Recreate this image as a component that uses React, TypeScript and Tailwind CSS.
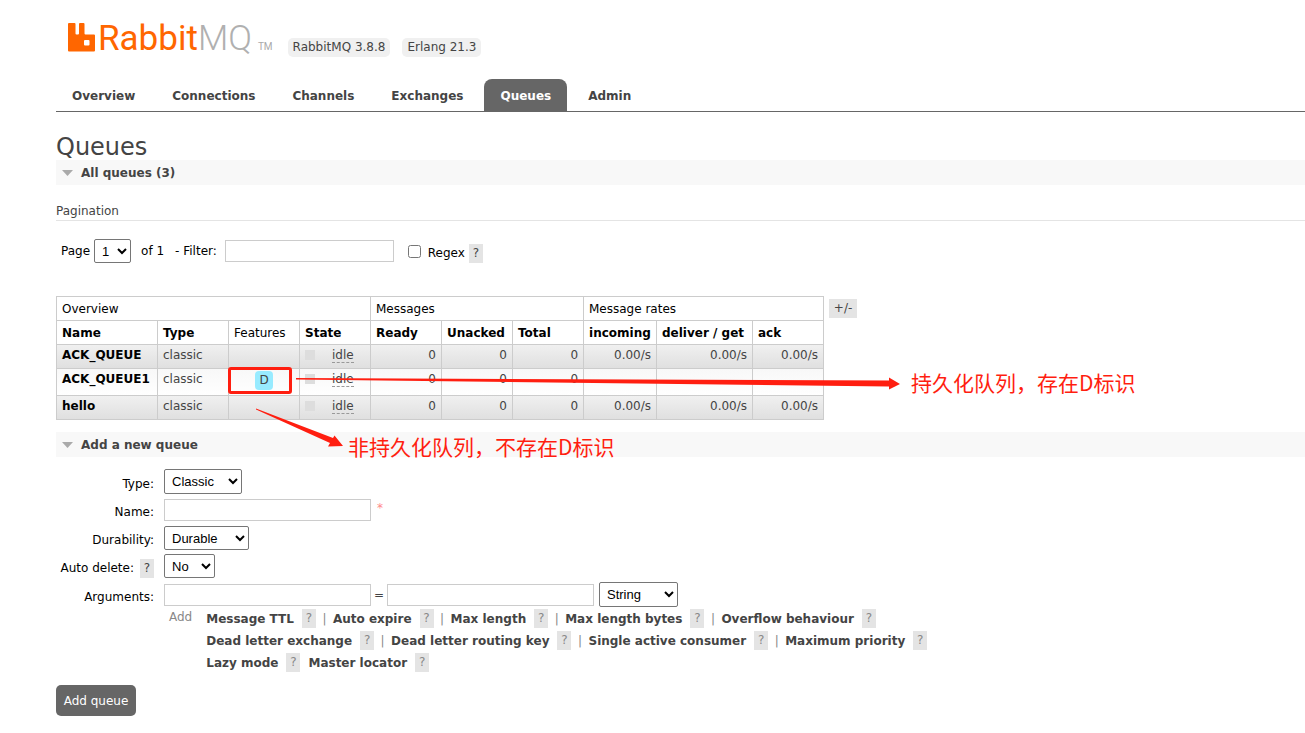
import React from 'react';

const tabs = ['Overview', 'Connections', 'Channels', 'Exchanges', 'Queues', 'Admin'];

const queues = [
  { name: 'ACK_QUEUE', durable: false, rate: '0.00/s' },
  { name: 'ACK_QUEUE1', durable: true, rate: '' },
  { name: 'hello', durable: false, rate: '0.00/s' },
];

const argumentRows = [
  ['Message TTL', 'Auto expire', 'Max length', 'Max length bytes', 'Overflow behaviour'],
  ['Dead letter exchange', 'Dead letter routing key', 'Single active consumer', 'Maximum priority'],
];

const inputStyle = 'h-[22px] border border-[#ccc] bg-white px-1';
const selectStyle =
  "rounded-[2px] border border-[#767676] bg-white pl-[3px] font-['Liberation_Sans',sans-serif] text-[13px] text-black";
const cellStyle = 'border border-[#ccc] px-[5px] pt-0.5 align-top leading-4';

const Help = ({ muted = false }: { muted?: boolean }) => (
  <button
    type="button"
    className={
      muted
        ? 'h-[19px] w-[14px] bg-[#e4e4e4] text-center leading-[19px] text-[#888]'
        : 'h-[19px] w-[14px] bg-[#e4e4e4] text-center leading-[19px] text-[#444]'
    }
  >
    ?
  </button>
);

const SectionTitle = ({ children }: { children: React.ReactNode }) => (
  <h2 className="flex h-[25px] items-center gap-2 bg-[#f8f8f8] pl-1.5 font-bold">
    <svg width="11" height="6" viewBox="0 0 11 6" aria-hidden="true">
      <path d="M0 0h11L5.500 6z" fill="#aaa" />
    </svg>
    {children}
  </h2>
);

const Logo = () => (
  <a href="#" className="flex items-end text-[35px] leading-9 font-light font-['Roboto',sans-serif]">
    <svg width="27" height="29" viewBox="0 0 27 29" className="mb-[5px] mr-[3px]" aria-hidden="true">
      <path
        d="M1 0h5.500q1 0 1 1v9.500q0 1 1 1h1.500q1 0 1-1V1q0-1 1-1H15.500q1 0 1 1v9.500q0 1 1 1h8.500q1 0 1 1v15q0 1-1 1H1q-1 0-1-1V1q0-1 1-1zM17 17q-1 0-1 1v3.500q0 1 1 1h3.500q1 0 1-1v-3.500q0-1-1-1z"
        fill="#f60"
        fillRule="evenodd"
      />
    </svg>
    <span className="font-normal text-[#f60]">Rabbit</span>
    <span className="text-[#b0b0b0]">MQ</span>
    <span className="ml-1.5 text-[10px] leading-5 font-normal text-[#aaa]">TM</span>
  </a>
);

const QueueTable = () => (
  <div className="flex items-start gap-[5px]">
    <table className="w-[768px] table-fixed border-collapse border border-[#ccc]">
      <colgroup>
        <col className="w-[101px]" />
        <col className="w-[71px]" />
        <col className="w-[71px]" />
        <col className="w-[71px]" />
        <col className="w-[71px]" />
        <col className="w-[71px]" />
        <col className="w-[71px]" />
        <col className="w-[73px]" />
        <col className="w-[96px]" />
        <col className="w-[71px]" />
      </colgroup>
      <thead className="text-left text-black">
        <tr className="h-6">
          <th colSpan={4} className="border border-[#ccc] px-[5px] font-normal">Overview</th>
          <th colSpan={3} className="border border-[#ccc] px-[5px] font-normal">Messages</th>
          <th colSpan={3} className="border border-[#ccc] px-[5px] font-normal">Message rates</th>
        </tr>
        <tr className="h-6 whitespace-nowrap">
          <th className="border border-[#ccc] px-[5px]">Name</th>
          <th className="border border-[#ccc] px-[5px]">Type</th>
          <th className="border border-[#ccc] px-[5px] font-normal">Features</th>
          <th className="border border-[#ccc] px-[5px]">State</th>
          <th className="border border-[#ccc] px-[5px]">Ready</th>
          <th className="border border-[#ccc] px-[5px]">Unacked</th>
          <th className="border border-[#ccc] px-[5px]">Total</th>
          <th className="border border-[#ccc] px-[5px]">incoming</th>
          <th className="border border-[#ccc] px-[5px]">deliver / get</th>
          <th className="border border-[#ccc] px-[5px]">ack</th>
        </tr>
      </thead>
      <tbody>
        {queues.map((queue) => (
          <tr
            key={queue.name}
            className={
              queue.durable
                ? 'h-[27px] bg-linear-to-b from-[#f8f8f8] to-white'
                : 'h-6 bg-linear-to-b from-[#f0f0f0] to-[#dfdfdf]'
            }
          >
            <td className={cellStyle}>
              <a href="#" className="font-bold text-black">{queue.name}</a>
            </td>
            <td className={cellStyle}>classic</td>
            <td className="border border-[#ccc] pt-0.5 text-center align-top">
              {queue.durable && (
                <span className="inline-block h-[19px] rounded-[4px] bg-[#98ebff] px-1 leading-[19px]">D</span>
              )}
            </td>
            <td className={cellStyle}>
              <div className="flex items-center">
                <span className="mr-[17px] size-2.5 bg-[#ddd]" />
                <span className="h-4 border-b border-dashed border-[#999] leading-4">idle</span>
              </div>
            </td>
            <td className={`${cellStyle} text-right`}>0</td>
            <td className={`${cellStyle} text-right`}>0</td>
            <td className={`${cellStyle} text-right`}>0</td>
            <td className={`${cellStyle} text-right`}>{queue.rate}</td>
            <td className={`${cellStyle} text-right`}>{queue.rate}</td>
            <td className={`${cellStyle} text-right`}>{queue.rate}</td>
          </tr>
        ))}
      </tbody>
    </table>
    <button type="button" className="mt-[3px] h-[19px] w-7 bg-[#e4e4e4] text-center leading-[19px]">
      +/-
    </button>
  </div>
);

const labelStyle = 'flex w-[98px] items-center justify-end gap-1.5 pt-1 text-black';

const AddQueueForm = () => (
  <form className="pt-3">
    <div className="flex flex-col gap-1">
      <div className="flex gap-2.5">
        <label htmlFor="type" className={labelStyle}>Type:</label>
        <select id="type" className={`${selectStyle} h-[25px] w-[78px]`}>
          <option>Classic</option>
          <option>Quorum</option>
        </select>
      </div>
      <div className="flex h-6 gap-2.5">
        <label htmlFor="name" className={labelStyle}>Name:</label>
        <div className="flex items-center gap-1.5">
          <input id="name" type="text" className={`${inputStyle} w-[207px]`} />
          <span className="pb-1 text-[#f88]">*</span>
        </div>
      </div>
      <div className="flex gap-2.5">
        <label htmlFor="durability" className={labelStyle}>Durability:</label>
        <select id="durability" className={`${selectStyle} h-6 w-[85px]`}>
          <option>Durable</option>
          <option>Transient</option>
        </select>
      </div>
      <div className="flex gap-2.5">
        <div className={labelStyle}>
          <label htmlFor="autoDelete">Auto delete:</label>
          <Help />
        </div>
        <select id="autoDelete" className={`${selectStyle} h-6 w-[51px]`}>
          <option>No</option>
          <option>Yes</option>
        </select>
      </div>
      <div className="flex gap-2.5">
        <label htmlFor="argumentKey" className={labelStyle}>Arguments:</label>
        <div className="flex items-center">
          <input id="argumentKey" type="text" className={`${inputStyle} w-[207px]`} />
          <span className="w-4 text-center">=</span>
          <input type="text" aria-label="Argument value" className={`${inputStyle} w-[207px]`} />
          <select aria-label="Argument type" className={`${selectStyle} ml-[5px] h-[25px] w-[79px]`}>
            <option>String</option>
            <option>Number</option>
            <option>Boolean</option>
            <option>List</option>
          </select>
        </div>
      </div>
    </div>
    <div className="flex gap-[14px] pt-0.5 pl-[113px]">
      <span className="leading-4 text-[#888]">Add</span>
      <div className="flex flex-col gap-[3px] whitespace-nowrap">
        {argumentRows.map((row) => (
          <div key={row[0]} className="flex items-center">
            {row.map((argument, index) => (
              <React.Fragment key={argument}>
                {index > 0 && <span className="w-[17px] text-center text-[#888]">|</span>}
                <a href="#" className="mr-2 font-bold">{argument}</a>
                <Help muted />
              </React.Fragment>
            ))}
          </div>
        ))}
        <div className="flex items-center">
          <a href="#" className="mr-2 font-bold">Lazy mode</a>
          <Help muted />
          <a href="#" className="mr-2 ml-2 font-bold">Master locator</a>
          <Help muted />
        </div>
      </div>
    </div>
    <button type="submit" className="mt-[13px] h-[31px] w-20 rounded-[5px] bg-[#666] text-center text-white">
      Add queue
    </button>
  </form>
);

/* Red notes drawn on top of the table */
const Annotations = () => (
  <div className="pointer-events-none absolute inset-0 font-['Noto_Sans_CJK_SC',sans-serif] text-[21px] leading-7 whitespace-nowrap text-[#ff1e10]">
    <div className="absolute top-[367px] left-[228px] h-[27px] w-16 rounded-[3px] border-3 border-[#ff1e10]" />
    <svg className="absolute top-0 left-0" width="920" height="470" viewBox="0 0 920 470" aria-hidden="true">
      <path d="M296 378L889 380.500V377.500L900 384L889 389.500V386.500L296 379.500z" fill="#ff1e10" />
      <path d="M256 408.500L333 438L334.500 435.500L343 446L328 446.500L330 443L256 409.500z" fill="#ff1e10" />
    </svg>
    <p className="absolute top-[368px] left-[911px]">持久化队列，存在D标识</p>
    <p className="absolute top-[432px] left-[348px]">非持久化队列，不存在D标识</p>
  </div>
);

const App = () => {
  return (
    <div className="relative overflow-hidden bg-white pb-4 pl-14 font-['DejaVu_Sans',sans-serif] text-[12px] leading-4 text-[#444]">
      <header>
        <div className="flex h-[79px] items-start pt-[21px] pl-3">
          <Logo />
          <span className="mt-[17px] ml-[15px] rounded-[5px] bg-[#f0f0f0] px-[5px] leading-[19px]">RabbitMQ 3.8.8</span>
          <span className="mt-[17px] ml-3 rounded-[5px] bg-[#f0f0f0] px-[5px] leading-[19px]">Erlang 21.3</span>
        </div>
        <nav className="flex gap-[5px] border-b border-[#666] font-bold">
          {tabs.map((tab) => (
            <a
              key={tab}
              href="#"
              className={
                tab === 'Queues'
                  ? 'rounded-t-[8px] bg-[#666] px-4 pt-[9px] pb-[7px] text-white'
                  : 'px-4 pt-[9px] pb-[7px]'
              }
            >
              {tab}
            </a>
          ))}
        </nav>
      </header>
      <main>
        <h1 className="pt-[22px] text-[24px] leading-[26px]">Queues</h1>
        <SectionTitle>All queues (3)</SectionTitle>
        <h3 className="border-b border-[#e4e4e4] pt-[18px] pb-px">Pagination</h3>
        <div className="flex items-center pt-[18px] pb-[33px] pl-[5px] text-black">
          <label htmlFor="page" className="mr-1">Page</label>
          <select id="page" className={`${selectStyle} h-6 w-[37px]`}>
            <option>1</option>
          </select>
          <span className="ml-2.5">of 1</span>
          <label htmlFor="filter" className="mr-2 ml-[11px]">- Filter:</label>
          <input id="filter" type="text" className={`${inputStyle} w-[169px]`} />
          <input id="regex" type="checkbox" className="mr-[7px] ml-3.5 size-[13px]" />
          <div className="flex items-center gap-1 pt-1">
            <label htmlFor="regex">Regex</label>
            <Help />
          </div>
        </div>
        <QueueTable />
        <div className="pt-3">
          <SectionTitle>Add a new queue</SectionTitle>
        </div>
        <AddQueueForm />
      </main>
      <Annotations />
    </div>
  );
};

export default App;
